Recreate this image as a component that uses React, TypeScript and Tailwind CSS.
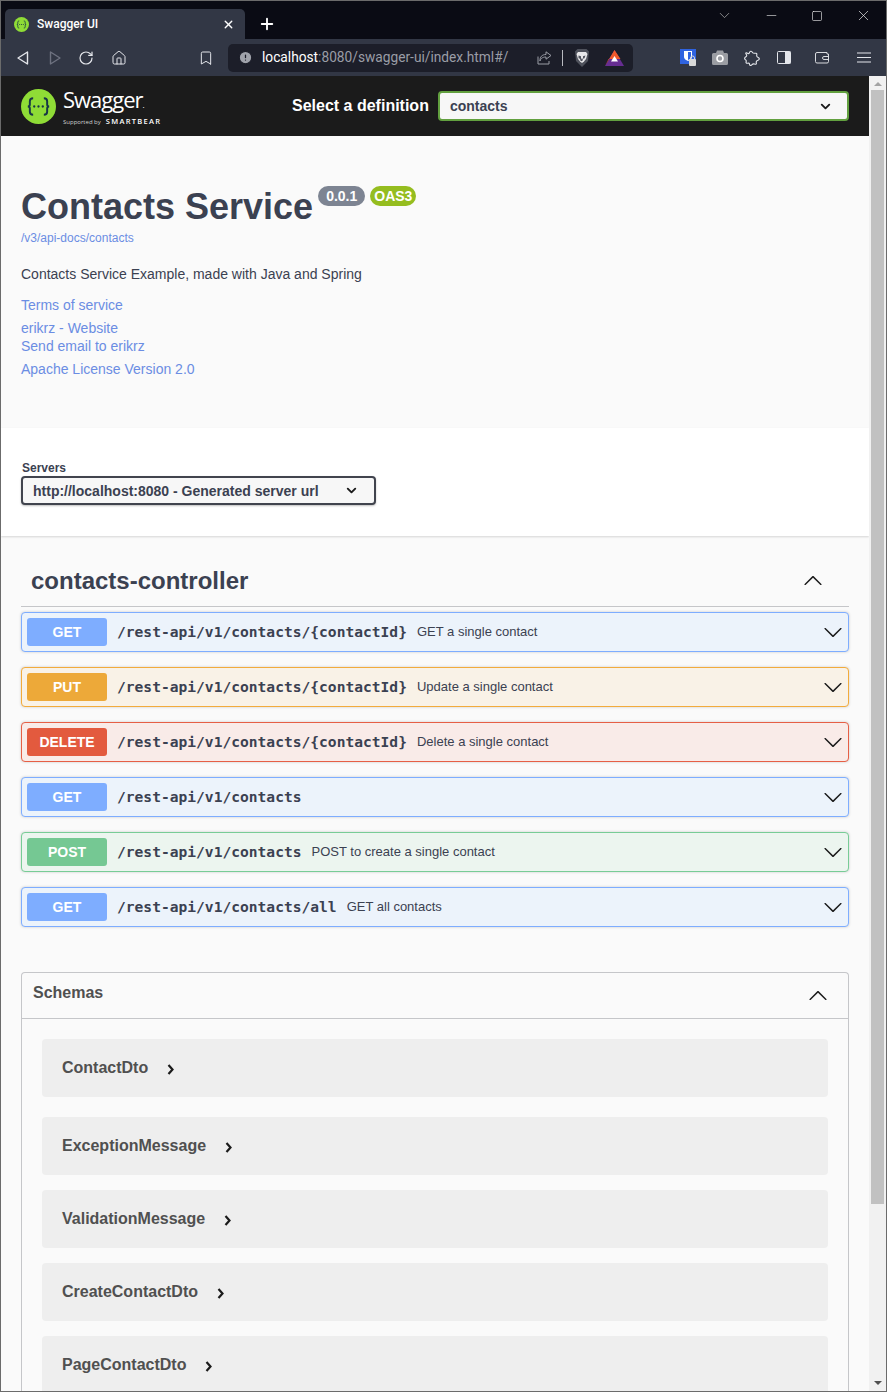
import { ChevronDown, RotateCw, Home, Bookmark, Minus, Square, X, Plus, Info } from "lucide-react";

const operations = [
  { method: "GET", path: "/rest-api/v1/contacts/{contactId}", summary: "GET a single contact", row: "border-[#7eadff] bg-[#ecf3fb]", badge: "bg-[#7eadff]" },
  { method: "PUT", path: "/rest-api/v1/contacts/{contactId}", summary: "Update a single contact", row: "border-[#f2ab3c] bg-[#f9f2e7]", badge: "bg-[#eda939]" },
  { method: "DELETE", path: "/rest-api/v1/contacts/{contactId}", summary: "Delete a single contact", row: "border-[#e65f45] bg-[#f9ebe8]", badge: "bg-[#e35a3e]" },
  { method: "GET", path: "/rest-api/v1/contacts", summary: "", row: "border-[#7eadff] bg-[#ecf3fb]", badge: "bg-[#7eadff]" },
  { method: "POST", path: "/rest-api/v1/contacts", summary: "POST to create a single contact", row: "border-[#78cc96] bg-[#ecf5ef]", badge: "bg-[#75c893]" },
  { method: "GET", path: "/rest-api/v1/contacts/all", summary: "GET all contacts", row: "border-[#7eadff] bg-[#ecf3fb]", badge: "bg-[#7eadff]" },
];

const models = [
  { name: "ContactDto", spacing: "mt-5" },
  { name: "ExceptionMessage", spacing: "mt-5" },
  { name: "ValidationMessage", spacing: "mt-[15px]" },
  { name: "CreateContactDto", spacing: "mt-[15px]" },
  { name: "PageContactDto", spacing: "mt-[15px]" },
];

const SwaggerMark = ({ size }: { size: number }) => (
  <svg width={size} height={size} viewBox="0 0 36 36" className="shrink-0">
    <circle cx="18" cy="18" r="18" fill="#8fdc36" />
    <path d="M12.500 9.500c-2.500 0-3.400 1.200-3.400 3.200v3.200c0 1.400-.8 2.100-2.100 2.100 1.300 0 2.100.7 2.100 2.100v3.200c0 2 .9 3.200 3.400 3.200M23.500 9.500c2.500 0 3.400 1.200 3.400 3.200v3.200c0 1.400.8 2.100 2.100 2.100-1.300 0-2.100.7-2.100 2.100v3.200c0 2-.9 3.200-3.400 3.200" fill="none" stroke="#173647" strokeWidth="2" />
    <circle cx="13.600" cy="18" r="1.200" fill="#173647" />
    <circle cx="18" cy="18" r="1.200" fill="#173647" />
    <circle cx="22.400" cy="18" r="1.200" fill="#173647" />
  </svg>
);

// swagger-ui's own accordion arrow
const Arrow = ({ up }: { up?: boolean }) => (
  <svg width="20" height="20" viewBox="0 0 20 20" className={up ? "rotate-180" : ""} fill="#1b1b1b">
    <path d="M17.418 6.109c.272-.268.709-.268.979 0s.271.701 0 .969l-7.908 7.830c-.270.268-.707.268-.979 0l-7.908-7.830c-.270-.268-.270-.701 0-.969.271-.268.709-.268.979 0L10 13.250l7.418-7.141z" />
  </svg>
);

const BrowserChrome = () => (
  <div className="shrink-0 font-['Roboto',sans-serif]">
    <div className="flex h-[38px] bg-[#0a0b14] pl-1 pt-2">
      <div className="flex h-[30px] w-[240px] items-center rounded-t-[5px] bg-[#323745] pl-[9px] pr-2.5 text-white">
        <SwaggerMark size={15} />
        <span className="ml-2 text-xs font-medium">Swagger UI</span>
        <X size={13} strokeWidth={2.500} className="ml-auto" />
      </div>
      <Plus size={18} strokeWidth={2.500} className="ml-[13px] mt-[6px] text-white" />
      <div className="ml-auto flex h-[13px] items-center pr-[14px] text-[#e8e8e8]">
        <ChevronDown size={17} strokeWidth={1} className="mr-[31px] text-[#b5b5b5]" />
        <Minus size={15} strokeWidth={1} className="mr-[32px]" />
        <Square size={12} strokeWidth={1.300} className="mr-[32px]" />
        <X size={17} strokeWidth={1} />
      </div>
    </div>
    <div className="flex h-[37px] items-center bg-[#323745] text-[#e4e6eb]">
      <svg width="12" height="14" viewBox="0 0 12 14" className="ml-[16px]" fill="none" stroke="#e4e6eb" strokeWidth="1.400" strokeLinejoin="round">
        <path d="M10.500 1L1 7l9.500 6z" />
      </svg>
      <svg width="12" height="14" viewBox="0 0 12 14" className="ml-[20px]" fill="none" stroke="#6e7280" strokeWidth="1.400" strokeLinejoin="round">
        <path d="M1.500 1L11 7l-9.500 6z" />
      </svg>
      <RotateCw size={16} strokeWidth={1.800} className="ml-[17px]" />
      <Home size={16} strokeWidth={1.500} className="ml-[17px]" />
      <Bookmark size={16} strokeWidth={1.500} className="ml-[71px]" />
      <div className="ml-[14px] flex h-7 w-[405px] items-center rounded-[5px] bg-[#1c1e29] pl-[10px] pr-[9px]">
        <Info size={15} fill="#a0a3ab" stroke="#1c1e29" strokeWidth={2} className="rotate-180" />
        <span className="ml-[9px] text-[13.720px]">
          <span className="text-white">localhost</span>
          <span className="text-[#9a9da6]">:8080/swagger-ui/index.html#/</span>
        </span>
        <svg width="15" height="14" viewBox="0 0 15 14" className="ml-auto" fill="none" stroke="#9a9da6" strokeWidth="1">
          <path d="M9 .8l5 3.700-5 3.700V6C5 6 3.500 8 3 10c-.3-4 2-6.500 6-6.500zM1 5.500V13h11V10" />
        </svg>
        <div className="ml-[10px] h-4 w-px bg-[#b8bac0]" />
        <svg width="16" height="18" viewBox="0 0 16 18" className="ml-[11px]">
          <path d="M3.500 0h9L15 2.500l-1 9.500-6 6-6-6-1-9.500z" fill="#4f525c" />
          <path d="M4 3h8l1.500 2-1.500 5-2 2.500L8 14l-2-1.500L4 10 2.500 5z" fill="#e8e8ea" />
          <path d="M4.500 6.500l2.500.8v1.700l1 1.500 1-1.500V7.300l2.500-.8-1 2.700-1.500.5-.5 2-1 .5-1-.5-.5-2-1.500-.5z" fill="#4f525c" />
        </svg>
        <svg width="19" height="16" viewBox="0 0 19 16" className="ml-[15px]">
          <path d="M9.500 0L19 16H0z" fill="#662d91" />
          <path d="M9.500 0L15.500 9H3.500L0 16z" fill="#f1592a" />
          <path d="M9.500 6l3.500 5.500H6z" fill="#ffffff" />
        </svg>
      </div>
      <svg width="16" height="17" viewBox="0 0 16 17" className="ml-[47px]">
        <rect width="16" height="15" fill="#2f63e0" />
        <path d="M4 2h8v6c0 2-2 3-4 4-2-1-4-2-4-4z" fill="#fff" />
        <path d="M8 3h3v5c0 1.500-1.500 2.500-3 3z" fill="#2f63e0" />
        <rect x="9" y="10" width="7" height="7" rx="1" fill="#d8d8d8" />
        <path d="M10.500 10.500V9a2 2 0 0 1 4 0v1.500" fill="none" stroke="#d8d8d8" />
      </svg>
      <svg width="16" height="15" viewBox="0 0 16 15" className="ml-4">
        <path d="M1.500 3H4l1-2.500h6L12 3h2.500A1.500 1.500 0 0 1 16 4.500v9a1.500 1.500 0 0 1-1.500 1.500h-13A1.500 1.500 0 0 1 0 13.500v-9A1.500 1.500 0 0 1 1.500 3z" fill="#9b9da3" />
        <circle cx="8" cy="8.500" r="3" fill="none" stroke="#ffffff" strokeWidth="1.600" />
      </svg>
      <svg width="16" height="16" viewBox="0 0 16 16" className="ml-[16px]" fill="none" stroke="#e4e6eb" strokeWidth="1.100">
        <path d="M5 3.500c1-2.500 2.500-3 3.500-1 .5 1 1.500 1 3.500.7.800-.1 1 .8.700 2.300-.2 1 .3 1.500 1.500 2 1.800.8 1.300 2.500-.7 3-1.200.3-1.500 1-1.200 2.300.3 1.300-.3 1.700-1.800 1.200-1.200-.4-1.800-.3-2.500.7-1 1.300-2.400 1-2.500-.6 0-.9-.5-1.200-1.800-.9-1.500.3-2-.5-1.500-1.700.4-1-.2-1.500-1-2-1-.8-.7-2 .7-2.700.8-.4 1-.9.700-2C1 2.800 1.800 2.300 3 3c1 .6 1.600.7 2 .5z" />
      </svg>
      <svg width="14" height="13" viewBox="0 0 14 13" className="ml-[17px]">
        <rect x="0.500" y="0.500" width="13" height="12" rx="1" fill="none" stroke="#e4e6eb" />
        <rect x="8" y="0.500" width="5.500" height="12" fill="#e4e6eb" />
      </svg>
      <svg width="14" height="13" viewBox="0 0 14 13" className="ml-[24px]" fill="none" stroke="#d8dade" strokeWidth="1">
        <path d="M12 3V1.500H2A1.500 1.500 0 0 0 .5 3v7.500A1.500 1.500 0 0 0 2 12h10a1.500 1.500 0 0 0 1.500-1.500V3z" />
        <path d="M13.500 5.500H9a1.500 1.500 0 0 0 0 3h4.500" />
      </svg>
      <svg width="14" height="11" viewBox="0 0 14 11" className="ml-[28px]" stroke="#e4e6eb" strokeWidth="1.200">
        <path d="M0 1h14M0 5.500h14M0 10h14" />
      </svg>
    </div>
  </div>
);

const Topbar = () => (
  <div className="flex h-[60px] items-center bg-[#1b1b1b] pl-5 pr-5">
    <SwaggerMark size={35} />
    <div className="ml-[7px] flex w-[100px] flex-col text-white">
      <span className="font-['Open_Sans',sans-serif] text-[22px] font-normal leading-[26px] tracking-[-1px]">Swagger<span className="text-[8px]">.</span></span>
      <span className="flex items-baseline gap-[5px] whitespace-nowrap leading-none">
        <span className="font-['Open_Sans',sans-serif] text-[6px] text-[#d0d0d0]">Supported by</span>
        <span className="font-['Open_Sans',sans-serif] text-[7.500px] font-semibold tracking-[1.300px]">SMARTBEAR</span>
      </span>
    </div>
    <span className="ml-[129px] whitespace-nowrap font-['Liberation_Sans',sans-serif] text-base font-bold text-white">Select a definition</span>
    <div className="ml-[9px] flex h-[30px] flex-1 items-center justify-between rounded-[4px] border-2 border-[#62a03f] bg-[#f7f7f7] pl-2.5 pr-[14px]">
      <span className="font-['Liberation_Sans',sans-serif] text-sm font-bold text-[#3b4151]">contacts</span>
      <ChevronDown size={15} strokeWidth={3} className="text-[#1b1b1b]" />
    </div>
  </div>
);

const ServiceInfo = () => (
  <div className="h-[292px] bg-[#fafafa] px-5 pt-[50px] font-['Liberation_Sans',sans-serif] text-[#3b4151]">
    <div className="flex items-start">
      <h1 className="text-4xl font-bold leading-[42px]">Contacts Service</h1>
      <span className="ml-[5px] rounded-[57px] bg-[#7d8492] px-2 py-0.5 text-sm font-bold leading-4 text-white">0.0.1</span>
      <span className="ml-[5px] rounded-[57px] bg-[#95bd1f] px-1 py-0.5 text-sm font-bold leading-4 text-white">OAS3</span>
    </div>
    <a className="mt-[3px] block text-xs leading-[14px] text-[#6b8de3]">/v3/api-docs/contacts</a>
    <p className="mt-5 text-sm leading-[18px]">Contacts Service Example, made with Java and Spring</p>
    <a className="mt-[13px] block text-sm leading-[18px] text-[#6b8de3]">Terms of service</a>
    <a className="mt-[5px] block text-sm leading-[18px] text-[#6b8de3]">erikrz - Website</a>
    <a className="block text-sm leading-[18px] text-[#6b8de3]">Send email to erikrz</a>
    <a className="mt-[5px] block text-sm leading-[18px] text-[#6b8de3]">Apache License Version 2.0</a>
  </div>
);

const Servers = () => (
  <div className="relative h-[108px] bg-white pl-5 pt-[33px] font-['Liberation_Sans',sans-serif] shadow-[0_1px_2px_0_rgba(0,0,0,0.15)]">
    <div className="pl-px text-xs font-bold leading-[14px] text-[#3b4151]">Servers</div>
    <div className="mt-px flex h-[29px] w-[355px] items-center justify-between rounded-[4px] border-2 border-[#41444e] bg-[#f7f7f7] pl-2.5 pr-[15px] shadow-[0_1px_2px_0_rgba(0,0,0,0.25)]">
      <span className="text-sm font-bold text-[#3b4151]">http://localhost:8080 - Generated server url</span>
      <ChevronDown size={15} strokeWidth={3} className="text-[#1b1b1b]" />
    </div>
  </div>
);

const Operation = ({ method, path, summary, row, badge }: (typeof operations)[number]) => (
  <div className={`flex h-10 items-center rounded-[4px] border pl-[5px] pr-[5px] shadow-[0_0_3px_0_rgba(0,0,0,0.19)] ${row}`}>
    <span className={`flex h-7 w-20 shrink-0 items-center justify-center rounded-[3px] text-sm font-bold text-white ${badge}`}>{method}</span>
    <span className="ml-2.5 font-['DejaVu_Sans_Mono',monospace] text-[14.600px] font-bold text-[#3b4151]">{path}</span>
    {summary && <span className="ml-2.5 text-[13px] text-[#3b4151]">{summary}</span>}
    <div className="ml-auto"><Arrow /></div>
  </div>
);

const Operations = () => (
  <div className="px-5 pt-[21px] font-['Liberation_Sans',sans-serif]">
    <div className="flex h-[50px] items-center justify-between border-b border-[#c5c6c9] pl-2.5 pr-[26px]">
      <h2 className="-mt-0.5 text-2xl font-bold text-[#3b4151]">contacts-controller</h2>
      <div className="-mt-0.5"><Arrow up /></div>
    </div>
    <div className="mt-[5px] flex flex-col gap-[15px]">
      {operations.map((operation, index) => (
        <Operation key={index} {...operation} />
      ))}
    </div>
  </div>
);

const Schemas = () => (
  <div className="mx-5 mt-[45px] rounded-t-[4px] border border-b-0 border-[#c5c6c9] font-['Liberation_Sans',sans-serif]">
    <div className="flex h-[46px] items-center justify-between border-b border-[#c5c6c9] pl-[11px] pr-5">
      <span className="-mt-1.5 text-base font-bold text-[#505050]">Schemas</span>
      <Arrow up />
    </div>
    <div className="px-5 pb-5">
      {models.map((model) => (
        <div key={model.name} className={`flex h-[58px] items-center rounded-[4px] bg-[#eeeeee] pl-5 ${model.spacing}`}>
          <span className="text-base font-bold text-[#505050]">{model.name}</span>
          <svg width="8" height="11" viewBox="0 0 8 11" className="ml-[19px] mt-0.5" fill="none" stroke="#1b1b1b" strokeWidth="2.200">
            <path d="M1.500 1l4 4.500-4 4.500" />
          </svg>
        </div>
      ))}
    </div>
  </div>
);

const Scrollbar = () => (
  <div className="flex w-[17px] shrink-0 flex-col items-center bg-[#f1f1f1]">
    <div className="mt-[6px] h-0 w-0 border-x-[4px] border-b-[4px] border-x-transparent border-b-[#a3a3a3]" />
    <div className="mt-[4px] h-[1114px] w-[13px] bg-[#c1c1c1]" />
    <div className="mb-[6px] mt-auto h-0 w-0 border-x-[4px] border-t-[4px] border-x-transparent border-t-[#505050]" />
  </div>
);

export default function App() {
  return (
    <div className="flex h-[1392px] w-[887px] flex-col overflow-hidden border border-[#6b6b6b] bg-[#fafafa]">
      <BrowserChrome />
      <div className="flex min-h-0 flex-1">
        <div className="min-w-0 flex-1 overflow-hidden">
          <Topbar />
          <ServiceInfo />
          <Servers />
          <Operations />
          <Schemas />
        </div>
        <Scrollbar />
      </div>
    </div>
  );
}
